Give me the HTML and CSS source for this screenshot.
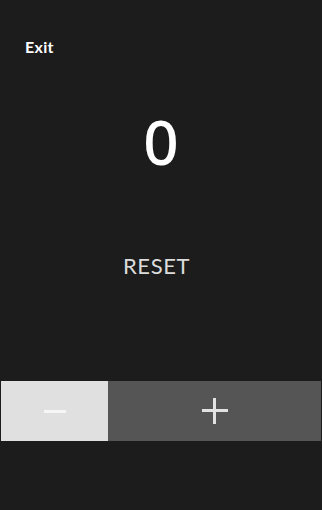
FILE: index.html
```html
<!DOCTYPE html>
<html>
<head>
<meta charset="utf-8">
<link rel="stylesheet" href="styles.css">
</head>
<body>
<div class="app">
  <header class="top">
    <span class="exit">Exit</span>
  </header>
  <div class="count">0</div>
  <div class="reset">RESET</div>
  <div class="controls">
    <button class="btn btn-minus" aria-label="decrement">
      <svg width="22" height="3" viewBox="0 0 22 3"><rect x="0" y="0" width="22" height="3" fill="#f6f6f6"/></svg>
    </button>
    <button class="btn btn-plus" aria-label="increment">
      <svg width="26" height="26" viewBox="0 0 26 26"><rect x="0" y="11" width="26" height="3" fill="#e2e2e2"/><rect x="11" y="0" width="3" height="26" fill="#e2e2e2"/></svg>
    </button>
  </div>
</div>
</body>
</html>
```

FILE: styles.css
```css
html, body {
  margin: 0;
  padding: 0;
  background: #1c1c1c;
  height: 100%;
}
.app {
  font-family: "Lato", "Open Sans", sans-serif;
  display: flex;
  flex-direction: column;
  height: 510px;
}
.top {
  padding: 37px 0 0 25px;
  height: 24px;
}
.exit {
  color: #ffffff;
  font-size: 16px;
  font-weight: 700;
  line-height: 20px;
  letter-spacing: 0.3px;
}
.count {
  margin-top: 45px;
  text-align: center;
  color: #ffffff;
  font-family: "Noto Sans", sans-serif;
  font-size: 62px;
  line-height: 70px;
  font-weight: 500;
}
.reset {
  margin-top: 77px;
  text-align: center;
  color: #dcdcdc;
  font-size: 22px;
  line-height: 26px;
  letter-spacing: 0.6px;
  padding-right: 9px;
}
.controls {
  margin: 102px 1px 0 1px;
  display: flex;
  height: 60px;
}
.btn {
  border: 0;
  padding: 0;
  margin: 0;
  display: flex;
  align-items: center;
  justify-content: center;
}
.btn-minus {
  width: 107px;
  background: #e0e0e0;
}
.btn-plus {
  flex: 1;
  background: #555555;
}
```
